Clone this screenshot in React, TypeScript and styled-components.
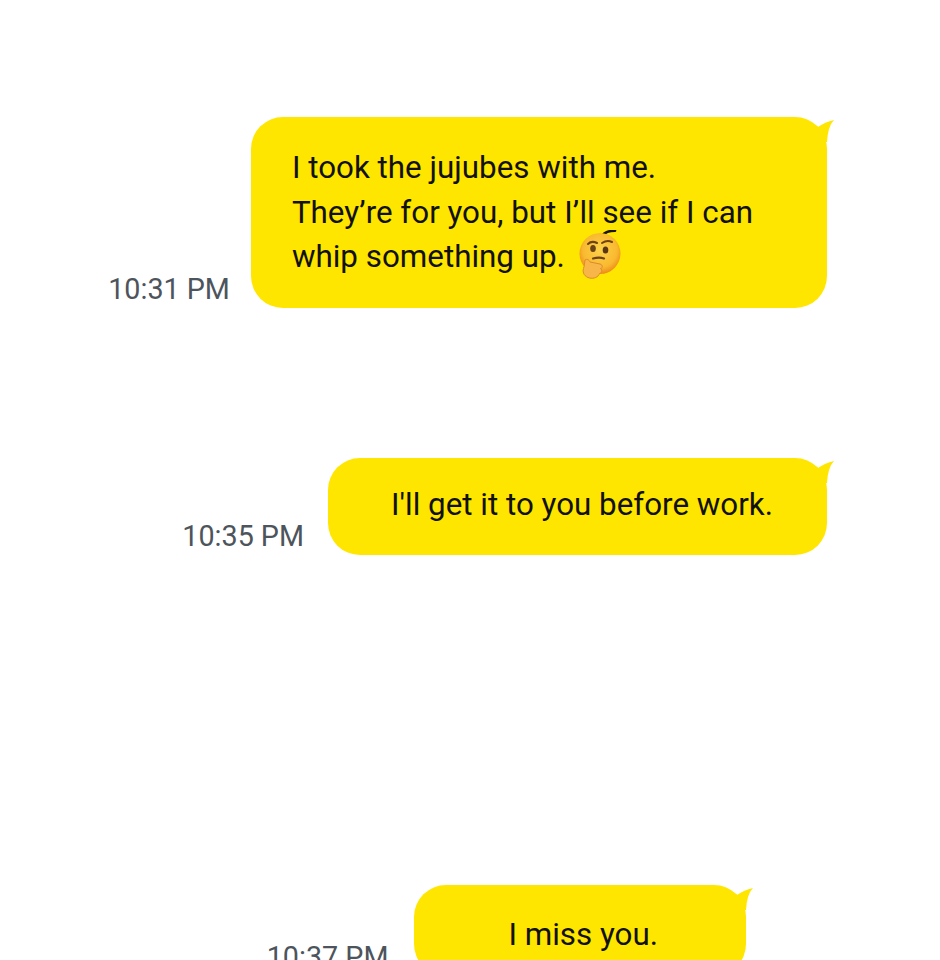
import styled, { createGlobalStyle } from "styled-components";

const GlobalStyle = createGlobalStyle`
  html, body {
    background: #fff;
    height: 960px;
    margin: 0;
    overflow: hidden;
  }
`;

type MessageProps = {
  time: string;
  top?: number;
  inset?: number;
  gap: number;
  padding: string;
  height: number;
  children: React.ReactNode;
};

function Message({ time, top = 0, inset = 0, gap, padding, height, children }: MessageProps) {
  return (
    <Row $top={top} $inset={inset} $gap={gap}>
      <Time>{time}</Time>
      <Bubble $padding={padding} $height={height}>
        <Tail viewBox="0 0 20 25" aria-hidden="true">
          <path d="M4 10 Q11 5 20 3 Q14 9 13 25 L4 25 Z" />
        </Tail>
        {children}
      </Bubble>
    </Row>
  );
}

function ThinkingFace() {
  return (
    <Emoji viewBox="0 0 44 50" aria-label="thinking face">
      <defs>
        <radialGradient id="skin" cx="50%" cy="42%" r="58%">
          <stop offset="0%" stopColor="#fcd24a" />
          <stop offset="72%" stopColor="#f9b92f" />
          <stop offset="100%" stopColor="#ee8a1a" />
        </radialGradient>
      </defs>
      <path d="M24 5 C26 2 30 0.8 36 0.6" fill="none" stroke="#1c1408" strokeWidth="2.6" strokeLinecap="round" />
      <circle cx="21" cy="23.5" r="20.5" fill="url(#skin)" />
      <path d="M9 14 C11.5 11.5 15 11.5 18 13" fill="none" stroke="#6e4215" strokeWidth="2" strokeLinecap="round" />
      <path d="M23 13 C26 11 30 10.5 33 12" fill="none" stroke="#6e4215" strokeWidth="2" strokeLinecap="round" />
      <ellipse cx="14" cy="18.5" rx="2.8" ry="3.6" fill="#6a4216" />
      <ellipse cx="26.5" cy="20" rx="2.8" ry="3.6" fill="#5a3512" />
      <path d="M14 28.5 C18 27.5 22 27.5 25 28.5" fill="none" stroke="#6e4215" strokeWidth="2.2" strokeLinecap="round" />
      <path
        d="M6 30 C8 28.5 10 30 11 32 L21 34 C24 35 24 38 21.5 38.5 C23.5 40 23 43 20.5 43.5 C19.5 47 15 49 10.5 48 C6 47 3 43 4.5 38.5 C5.5 36 5.5 33 6 30 Z"
        fill="#f8b648"
        stroke="#dd8a2a"
        strokeWidth="1"
      />
    </Emoji>
  );
}

export default function App() {
  return (
    <>
      <GlobalStyle />
      <Page>
        <Message time="10:31 PM" gap={21} padding="29px 74px 0 41px" height={191}>
          I took the jujubes with me.
          <br />
          They’re for you, but I’ll see if I can
          <br />
          whip something up.
          <ThinkingFace />
        </Message>
        <Message time="10:35 PM" top={150} gap={24} padding="25px 54px 0 63px" height={97}>
          I'll get it to you before work.
        </Message>
        <Message time="10:37 PM" top={330} inset={81} gap={26} padding="28px 88px 0 94px" height={91}>
          I miss you.
        </Message>
      </Page>
    </>
  );
}

const Page = styled.main`
  display: flex;
  flex-direction: column;
  font-family: Roboto, "Liberation Sans", sans-serif;
  height: 960px;
  overflow: hidden;
  padding: 117px 113px 0 0;
`;

const Row = styled.div<{ $top: number; $inset: number; $gap: number }>`
  align-items: flex-end;
  display: flex;
  gap: ${(p) => p.$gap}px;
  justify-content: flex-end;
  margin-right: ${(p) => p.$inset}px;
  margin-top: ${(p) => p.$top}px;
`;

const Time = styled.span`
  color: #4d545c;
  font-size: 28.7px;
  line-height: 34px;
  padding-bottom: 2px;
  white-space: nowrap;
`;

const Bubble = styled.div<{ $padding: string; $height: number }>`
  background: #ffe600;
  border-radius: 32px;
  box-sizing: border-box;
  color: #111108;
  flex-shrink: 0;
  font-size: 31.35px;
  height: ${(p) => p.$height}px;
  line-height: 44.5px;
  padding: ${(p) => p.$padding};
  position: relative;
  white-space: nowrap;
`;

const Tail = styled.svg`
  fill: #ffe600;
  height: 25px;
  position: absolute;
  right: -7px;
  top: 0;
  width: 20px;
`;

const Emoji = styled.svg`
  height: 50px;
  margin: -20px 0 -20px 14px;
  vertical-align: 7px;
  width: 44px;
`;
